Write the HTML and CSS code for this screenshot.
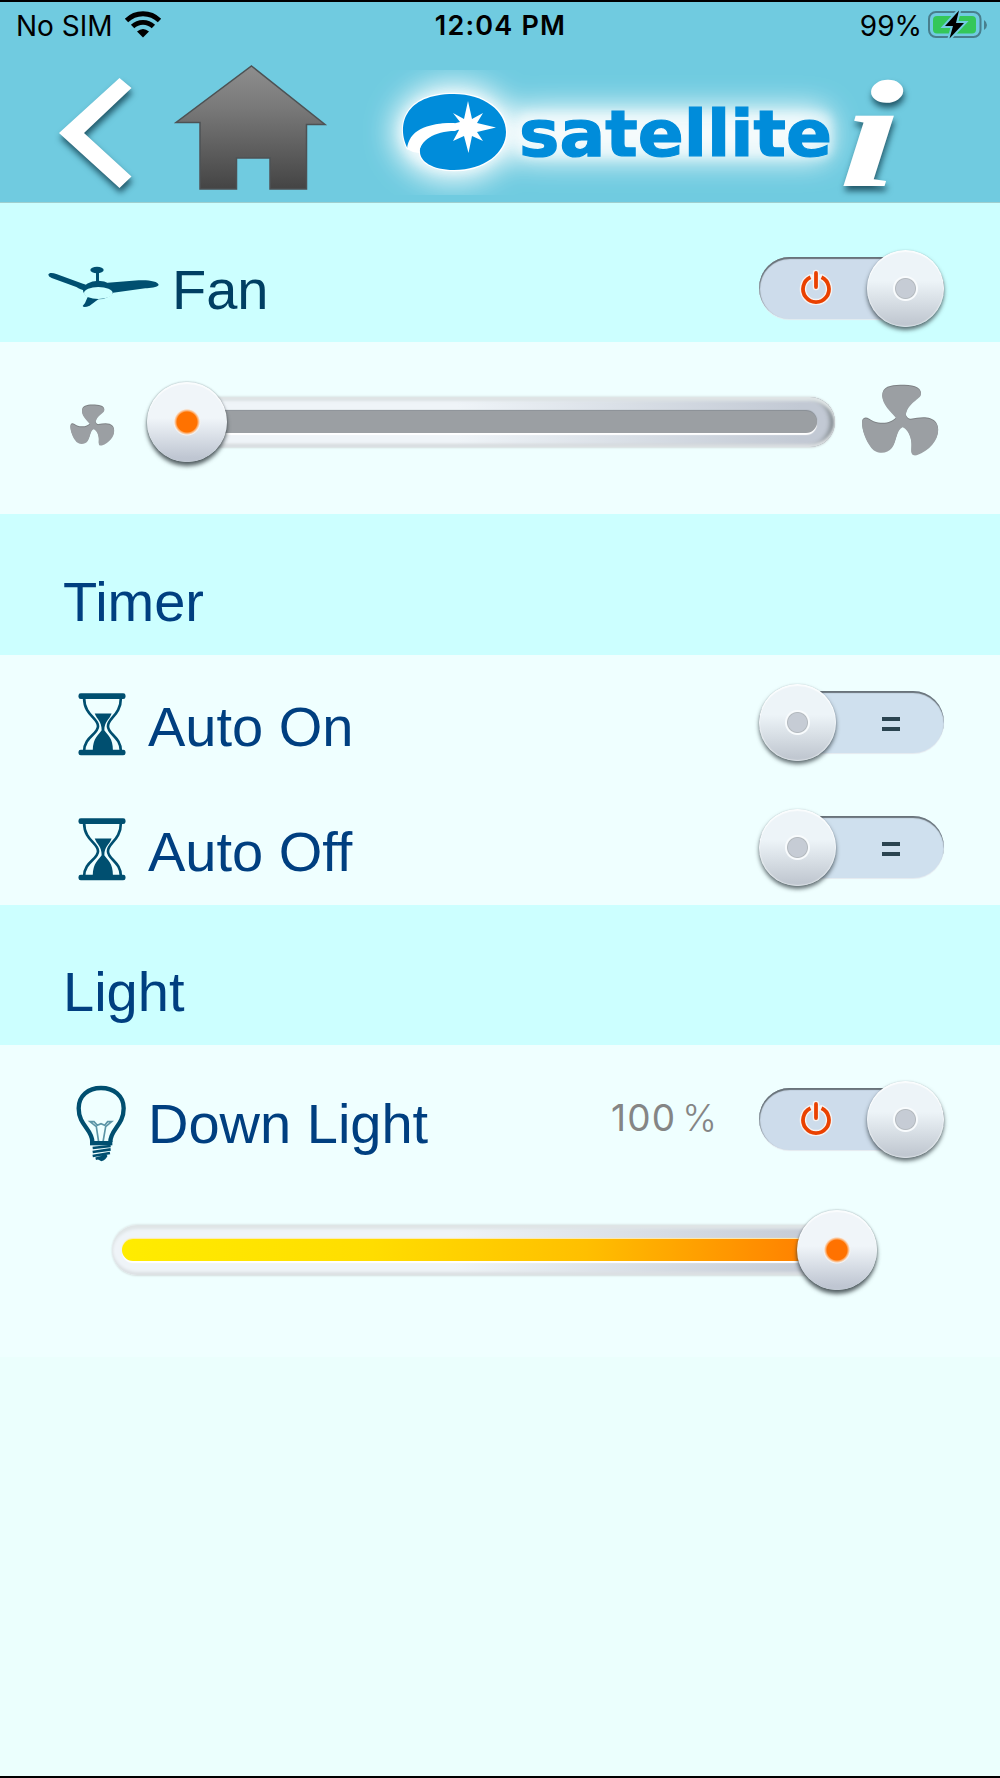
FILE: index.html
```
<!DOCTYPE html>
<html lang="en">
<head>
  <meta charset="UTF-8">
  <title>Satellite</title>
  <link rel="stylesheet" href="styles.css">
</head>
<body>
  <!-- shared shapes -->
  <svg width="0" height="0" class="defs">
    <defs>
      <symbol id="blades" viewBox="363 70 236 214">
        <path d="M468 170C450 150 428 130 426 105C426 77 450 73 480 72C515 72 543 76 543 98C543 112 500 125 497 163Q503 176 512 175C540 170 570 165 588 185C608 215 580 265 530 282C507 285 516 268 514 245C513 225 500 200 487 197C468 205 470 240 455 260C440 280 405 280 390 255C375 235 362 200 366 178C375 163 385 175 400 182C430 192 455 185 468 170Z"/>
      </symbol>
      <symbol id="hourglass" viewBox="83 398 144 190">
        <g fill="none" stroke="#004f70" stroke-width="8">
          <path d="M101 412C101 465 143 473 143 498C143 523 101 530 101 574"/>
          <path d="M212 412C212 465 173 473 173 498C173 523 212 530 212 574"/>
        </g>
        <path fill="#004f70" d="M133 460H184C178 478 162 484 162 510C172 525 188 532 188 572H127C128 532 144 525 154 510C154 484 140 478 133 460Z"/>
        <rect x="84" y="399" width="142" height="17" rx="7" fill="#004f70"/>
        <rect x="84" y="569" width="142" height="17" rx="7" fill="#004f70"/>
      </symbol>
      <symbol id="power" viewBox="0 0 36 36">
        <g fill="none" stroke-linecap="round" class="power-glow">
          <path d="M12.5 8.3A13 13 0 1 0 23.5 8.3M18 4V18"/>
        </g>
        <g fill="none" stroke="#ea4100" stroke-width="3.8">
          <path d="M12.5 8.3A13 13 0 1 0 23.5 8.3"/>
          <path stroke-linecap="round" d="M18 4V18"/>
        </g>
      </symbol>
    </defs>
  </svg>

  <header class="header">
    <div class="status">
      <div class="status-left">
        <span>No SIM</span>
        <svg width="38" height="28" viewBox="0 0 38 28">
          <g fill="none" stroke="#000" stroke-width="4.8">
            <path d="M2.5 10.5A23.5 23.5 0 0 1 35.500 10.500"/>
            <path d="M8.600 16.600A15 15 0 0 1 29.400 16.600"/>
          </g>
          <path d="M13 21.500Q19 16.500 25 21.500L19 27.500Z"/>
        </svg>
      </div>
      <div class="clock">12:04 PM</div>
      <div class="status-right">
        <span>99%</span>
        <svg width="60" height="30" viewBox="0 0 60 30">
          <rect x="1" y="2" width="51.500" height="25" rx="7" fill="none" stroke="#487f8d" stroke-width="2"/>
          <path d="M56 10V20Q59 18 59 15T56 10Z" fill="#487f8d"/>
          <rect x="5" y="6" width="43" height="17.500" rx="4" fill="#34c759"/>
          <path d="M31 .5L17 16H25L21.500 28.500L36 13H28Z" stroke="#70cbe0" stroke-width="4"/>
          <path d="M31 .5L17 16H25L21.500 28.500L36 13H28Z"/>
        </svg>
      </div>
    </div>

    <div class="nav">
      <svg class="nav-icon" width="100" height="152" viewBox="50 50 100 152">
        <path d="M59 133L119.500 78L131.500 88L84 133L131.500 176.500L119.500 188Z" fill="#fff"/>
      </svg>
      <svg width="200" height="152" viewBox="150 50 200 152">
        <defs>
          <linearGradient id="roof" x1="0" y1="0" x2="0" y2="1">
            <stop offset="0" stop-color="#8e8e8e"/>
            <stop offset=".35" stop-color="#787878"/>
            <stop offset="1" stop-color="#444"/>
          </linearGradient>
        </defs>
        <path d="M251.500 66L325 124.500H306.500V189H270V158H236.500V189H200V122.500H176Z" fill="url(#roof)" stroke="#4d5254" stroke-width="1.500"/>
      </svg>
      <svg class="logo" width="490" height="152" viewBox="350 50 490 152">
        <defs>
          <filter id="glow" x="-40%" y="-80%" width="180%" height="260%">
            <feGaussianBlur stdDeviation="14"/>
          </filter>
          <filter id="halo" x="-10%" y="-20%" width="120%" height="140%">
            <feGaussianBlur stdDeviation="5"/>
          </filter>
          <clipPath id="logo-box">
            <rect x="350" y="70" width="510" height="125"/>
          </clipPath>
        </defs>
        <g clip-path="url(#logo-box)">
          <g filter="url(#glow)" fill="#fff" opacity=".9">
            <ellipse cx="454" cy="132" rx="62" ry="50"/>
            <rect x="510" y="106" width="322" height="56" rx="20"/>
          </g>
          <g filter="url(#halo)" fill="#fff" opacity=".45">
            <ellipse cx="454" cy="132" rx="55" ry="41"/>
            <rect x="518" y="112" width="314" height="46" rx="10"/>
          </g>
        </g>
        <path d="M408 149C396 126 404 94 454 94C484 94 506 111 506 132C506 153 484 170 454 170C432 170 420 161 420 152C419 141 432 130 455 130L454 123C430 122 408 134 408 149Z" fill="#008cda" stroke="#fff" stroke-width="2.500" paint-order="stroke"/>
        <path d="M407 149C409 131 425 123 454 123L462 128L455 131C434 131 420 141 419 153L413 152Z" fill="#fff"/>
        <path d="M468 101L472 119L483 113L477 123L496 127.500L477 132L483 141L472 136L468.500 153L464 136L453 141L459 130L452 124L460 122L453 113L464 119Z" fill="#fff"/>
        <text class="brand" x="519" y="155.500" textLength="313" lengthAdjust="spacingAndGlyphs">satellite</text>
      </svg>
      <svg class="nav-icon info" width="80" height="152" viewBox="840 50 80 152">
        <text class="info-text" transform="translate(838 186) skewX(-4) scale(1.400 1)">i</text>
      </svg>
    </div>
  </header>

  <main>
    <section class="heading fan-heading">
      <svg width="114" height="43" viewBox="50 80 342 129">
        <g fill="#004f70">
          <path d="M54 106C55 99 68 100 78 104L158 133Q175 135 170 152C158 154 148 149 138 143L64 116Q54 112 54 106Z"/>
          <path d="M232 130L325 123C350 121 385 125 385 137C382 144 358 146 345 147L248 160Z"/>
          <path d="M175 170L206 178L178 199Q160 207 157 200Q165 192 171 175Z"/>
          <ellipse cx="200" cy="92" rx="20" ry="10"/>
          <path d="M197 98H206V125H197Z"/>
          <ellipse cx="204" cy="152" rx="46" ry="28"/>
        </g>
        <ellipse cx="204" cy="161" rx="43" ry="18" fill="#cff"/>
      </svg>
      <span class="label">Fan</span>
      <div class="switch on">
        <svg class="power" width="36" height="36"><use href="#power"/></svg>
        <div class="knob"></div>
      </div>
    </section>

    <section class="panel fan-panel">
      <svg class="blades-small" width="45" height="41"><use href="#blades"/></svg>
      <div class="slider fan-slider">
        <div class="fill"></div>
        <div class="thumb" style="left: 39px"></div>
      </div>
      <svg class="blades-big" width="79" height="71"><use href="#blades"/></svg>
    </section>

    <section class="heading">
      <span class="label">Timer</span>
    </section>

    <section class="panel">
      <div class="row">
        <svg class="icon" width="48" height="63"><use href="#hourglass"/></svg>
        <span class="label">Auto On</span>
        <div class="switch off">
          <div class="knob"></div>
          <div class="equals"></div>
        </div>
      </div>
      <div class="row">
        <svg class="icon" width="48" height="63"><use href="#hourglass"/></svg>
        <span class="label">Auto Off</span>
        <div class="switch off">
          <div class="knob"></div>
          <div class="equals"></div>
        </div>
      </div>
    </section>

    <section class="heading light-heading">
      <span class="label">Light</span>
    </section>

    <section class="panel light-panel">
      <div class="row light-row">
        <svg class="icon" width="50" height="77" viewBox="78 378 150 231">
          <path d="M127 549C127 510 86 500 86 448C86 410 115 387 153 387C191 387 221 410 221 448C221 500 181 510 181 549" fill="none" stroke="#004f70" stroke-width="13"/>
          <g fill="none" stroke="#5c95a6" stroke-width="5">
            <path d="M146 549L139 503L120 488H132L142 499L153 494L164 499L173 488H185L167 503L159 549"/>
          </g>
          <path d="M120 546H187V559H120Z" fill="#004f70"/>
          <path d="M128 567L182 561M128 579L182 571M128 591L180 582M137 599L171 590" stroke="#004f70" stroke-width="8"/>
          <path d="M137 597L172 589Q168 604 154 607Z" fill="#004f70"/>
        </svg>
        <span class="label">Down Light</span>
        <div class="percent"><span>100</span><span>%</span></div>
        <div class="switch on">
          <svg class="power" width="36" height="36"><use href="#power"/></svg>
          <div class="knob"></div>
        </div>
      </div>
      <div class="slider light-slider">
        <div class="fill"></div>
        <div class="thumb" style="left: 725px"></div>
      </div>
    </section>
  </main>
</body>
</html>
```

FILE: styles.css
```
* {
  box-sizing: border-box;
}

body {
  margin: 0;
  height: 1778px;
  background: #ebfffd;
  border-top: 2px solid #000;
  border-bottom: 2px solid #000;
  font-family: "Liberation Sans", Arial, sans-serif;
  color: #003f80;
  overflow: hidden;
}

svg {
  display: block;
  flex: none;
}

.defs {
  position: absolute;
}

/* header */
.header {
  height: 201px;
  background: #70cbe0;
  border-bottom: 1px solid #9fcfcf;
}

.status {
  height: 48px;
  padding: 0 12px 0 16px;
  display: grid;
  grid-template-columns: 1fr auto 1fr;
  align-items: center;
  font-family: Inter, sans-serif;
  font-size: 28px;
  line-height: 48px;
  color: #000;
}

.status-left,
.status-right {
  display: flex;
  align-items: center;
}

.status-left {
  gap: 11px;
}

.status-left svg {
  margin-bottom: 4px;
}

.status-right {
  justify-content: flex-end;
  gap: 6px;
}

.status-right svg {
  margin-bottom: 2px;
}

.clock {
  font-weight: 600;
  font-size: 27px;
  letter-spacing: 1.2px;
  margin-right: 3px;
}

.nav {
  display: flex;
  height: 152px;
  padding-left: 50px;
}

.nav-icon {
  filter: drop-shadow(1px 5px 3px rgba(0, 40, 55, 0.7));
}

.logo,
.info {
  overflow: visible;
}

.brand {
  font-family: "DejaVu Sans", sans-serif;
  font-weight: bold;
  font-size: 64px;
  fill: #008cda;
  stroke: #008cda;
  stroke-width: 1.2px;
}

.info-text {
  font-family: "Liberation Serif", serif;
  font-weight: bold;
  font-style: italic;
  font-size: 153px;
  fill: #fff;
}

/* sections */
.heading {
  display: flex;
  align-items: center;
  height: 141px;
  padding: 34px 56px 0 63px;
  background: #cff;
}

.label {
  font-size: 56px;
  line-height: 64px;
  white-space: nowrap;
}

.fan-heading {
  height: 139px;
  padding: 30px 56px 0 47px;
}

.fan-heading .label {
  margin-left: 11px;
  padding-top: 4px;
  color: #003f63;
}

.light-heading {
  height: 140px;
}

.panel {
  background: #efffff;
}

.fan-panel {
  display: flex;
  align-items: center;
  height: 172px;
  padding: 0 60px 12px 70px;
}

.blades-small,
.blades-big {
  fill: #9b9fa3;
  filter: drop-shadow(0 -1px 0 #7d8184);
}

.blades-small {
  margin: 6px 33px 0 0;
}

.blades-big {
  margin: 0 0 3px 26px;
}

.row {
  display: flex;
  align-items: center;
  height: 125px;
  padding: 8px 56px 0 78px;
}

.row .label {
  margin-left: 22px;
  padding-top: 10px;
}

.icon {
  margin-top: 5px;
}

.light-panel {
  height: 312px;
}

.light-row {
  height: 148px;
  padding: 0 56px 0 76px;
}

.light-row .icon {
  margin-top: 9px;
}

.light-row .label {
  padding-top: 9px;
}

.percent {
  display: flex;
  gap: 6px;
  margin-left: auto;
  padding: 0 42px 4px 0;
  font-family: Inter, sans-serif;
  font-size: 37px;
  color: #858585;
}

.percent span:first-child {
  letter-spacing: 1.2px;
}

.percent span:last-child {
  font-size: 37px;
  font-weight: 300;
}

/* switches */
.switch {
  position: relative;
  flex: none;
  width: 185px;
  height: 62px;
  margin-left: auto;
  border-radius: 31px;
  background: #cddceb;
  box-shadow: inset 0 2px 1px #69737a, inset 1px 1px 1px #8c979e, 0 1px 1px #e4e9ef;
}

.percent + .switch {
  margin-left: 0;
}

.switch.off {
  background: #cfe0ee;
  box-shadow: inset 0 2px 1px #69737a, 0 1px 1px #e4e9ef;
}

.knob {
  position: absolute;
  top: -7px;
  width: 77px;
  height: 77px;
  border-radius: 50%;
  background:
    radial-gradient(circle, #c6ccd5 0 9px, #b4babf 10px, #f8fbfd 11px 12px, transparent 13px),
    linear-gradient(#edf4f8 40%, #c1c8d1 95%);
  box-shadow: inset 0 2px 1px rgba(255, 255, 255, 0.7), inset 0 0 1px 1px rgba(255, 255, 255, 0.4), 0 3px 4px rgba(50, 60, 65, 0.75), 0 0 1px rgba(60, 70, 75, 0.3);
}

.on .knob {
  right: 0;
}

.off .knob {
  left: 0;
}

.power {
  position: absolute;
  left: 39px;
  top: 12px;
}

.power-glow {
  stroke: #f6f3f2;
  stroke-width: 6.5px;
}

.equals {
  position: absolute;
  left: 123px;
  top: 26px;
  width: 18px;
  height: 14px;
  border: solid #2b4450;
  border-width: 4px 0;
}

/* sliders */
.slider {
  position: relative;
  height: 50px;
  border-radius: 25px;
  background: linear-gradient(90deg, #eff4f8 45%, #c2c9d4 95%);
  box-shadow: inset 0 4px 3px #dfe5e6, inset 0 -3px 3px #dce0e3, 0 -1px 2px #dfe9e9, 0 1px 2px #d5dddd;
}

.fill {
  position: absolute;
  height: 22px;
  top: 14px;
  border-radius: 11px;
}

.fan-slider {
  width: 688px;
  box-shadow: inset 0 4px 3px #dfe5e6, inset 0 -3px 3px #dce0e3, inset -5px 0 4px #858d92, 0 -1px 2px #dfe9e9, 0 1px 2px #d5dddd;
}

.fan-slider .fill {
  left: 20px;
  right: 18px;
  background: #9b9fa3;
  box-shadow: 0 -1px 1px #858b91, 0 2px 1px #fff;
}

.light-slider {
  width: 760px;
  margin: 32px 0 0 112px;
}

.light-slider .fill {
  left: 10px;
  right: 36px;
  background: linear-gradient(90deg, #ffec00, #fd0 35%, #ffbf00 65%, #ff7800);
  box-shadow: 0 -1px 1px #ffe9a8, 0 2px 1px #fff;
}

.thumb {
  position: absolute;
  top: 25px;
  width: 80px;
  height: 80px;
  margin: -40px 0 0 -40px;
  border-radius: 50%;
  background:
    radial-gradient(circle at 50% 40px, #ff7200 0 10px, #ffa55c 11px, #f4f3f2 13px, transparent 14px),
    linear-gradient(#f0f5f9 45%, #bfc6d2 95%);
  box-shadow: inset 0 2px 1px rgba(255, 255, 255, 0.7), 0 4px 4px rgba(50, 60, 65, 0.8), 0 0 2px rgba(60, 70, 75, 0.5);
}
```
